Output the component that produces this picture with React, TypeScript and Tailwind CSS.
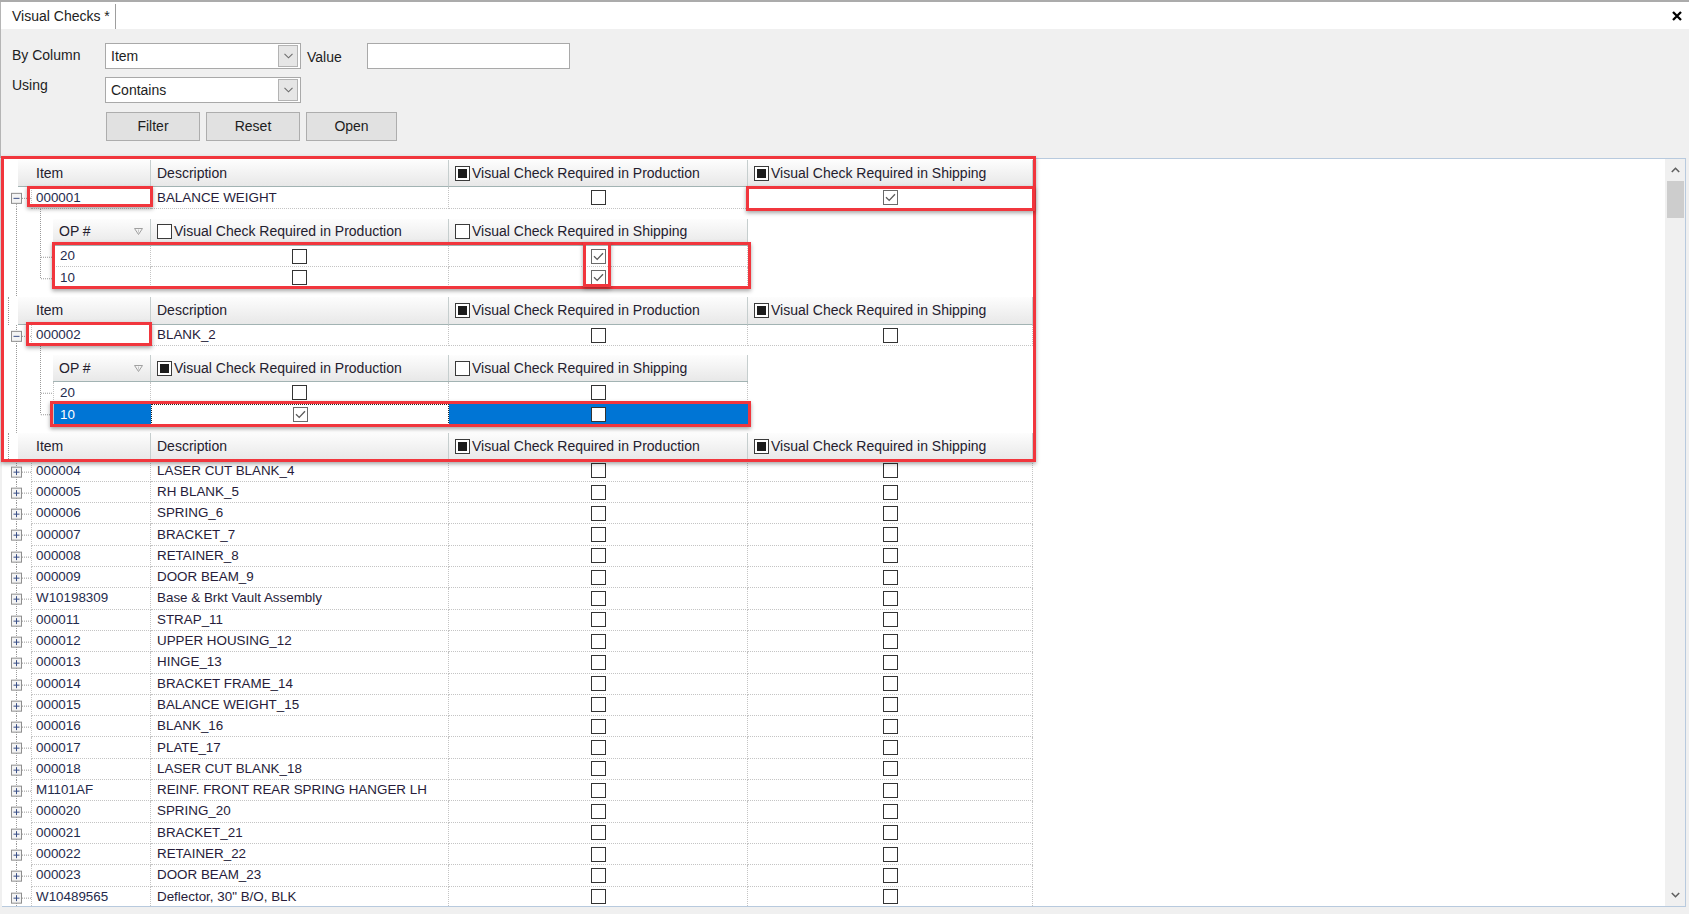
import React from 'react';

type Item = { item: string; desc: string };

const items: Item[] = [
  { item: '000004', desc: 'LASER CUT BLANK_4' },
  { item: '000005', desc: 'RH BLANK_5' },
  { item: '000006', desc: 'SPRING_6' },
  { item: '000007', desc: 'BRACKET_7' },
  { item: '000008', desc: 'RETAINER_8' },
  { item: '000009', desc: 'DOOR BEAM_9' },
  { item: 'W10198309', desc: 'Base & Brkt Vault Assembly' },
  { item: '000011', desc: 'STRAP_11' },
  { item: '000012', desc: 'UPPER HOUSING_12' },
  { item: '000013', desc: 'HINGE_13' },
  { item: '000014', desc: 'BRACKET FRAME_14' },
  { item: '000015', desc: 'BALANCE WEIGHT_15' },
  { item: '000016', desc: 'BLANK_16' },
  { item: '000017', desc: 'PLATE_17' },
  { item: '000018', desc: 'LASER CUT BLANK_18' },
  { item: 'M1101AF', desc: 'REINF. FRONT REAR SPRING HANGER LH' },
  { item: '000020', desc: 'SPRING_20' },
  { item: '000021', desc: 'BRACKET_21' },
  { item: '000022', desc: 'RETAINER_22' },
  { item: '000023', desc: 'DOOR BEAM_23' },
  { item: 'W10489565', desc: 'Deflector, 30" B/O, BLK' },
];

// red annotation frame drawn over the screenshot
const mark = 'absolute border-[3px] border-[#f1363d] shadow-[0_2px_4px_rgba(0,0,0,0.35)] pointer-events-none';

const CheckBox = ({ checked }: { checked?: boolean }) => (
  <span
    className={
      checked
        ? 'inline-flex w-[15px] h-[15px] shrink-0 items-center justify-center border border-[#6a6a6a] bg-white'
        : 'inline-flex w-[15px] h-[15px] shrink-0 items-center justify-center border border-[#333333] bg-white'
    }
  >
    {checked && (
      <svg width="11" height="9" viewBox="0 0 11 9">
        <path d="M1 4.3 L4.2 7.4 L10 1.2" fill="none" stroke="#5a5a5a" strokeWidth="1.3" />
      </svg>
    )}
  </span>
);

const HeadBox = ({ filled }: { filled?: boolean }) => (
  <span className="inline-flex w-[15px] h-[15px] shrink-0 border border-[#3a3a3a] bg-white p-[2px] mr-[2px]">
    {filled && <span className="flex-1 bg-[#1c1c1c]" />}
  </span>
);

const Expander = ({ open }: { open?: boolean }) => (
  <g>
    <rect x="9.5" y="-4.5" width="10" height="10" fill="#f4f4f4" stroke="#8e8e8e" />
    <line x1="11.5" y1="0.5" x2="17.5" y2="0.5" stroke="#3a4f86" />
    {!open && <line x1="14.5" y1="-2.5" x2="14.5" y2="3.5" stroke="#3a4f86" />}
  </g>
);

const Gutter = ({ h, first, open }: { h: number; first?: boolean; open?: boolean }) => {
  const c = h / 2;
  return (
    <svg width="29" height={h} className="block shrink-0">
      <line x1="14.5" y1={first ? c : 0} x2="14.5" y2={h} stroke="#9a9a9a" strokeDasharray="1 1" />
      <line x1="20" y1={c + 0.5} x2="29" y2={c + 0.5} stroke="#9a9a9a" strokeDasharray="1 1" />
      <g transform={`translate(0 ${c})`}>
        <Expander open={open} />
      </g>
    </svg>
  );
};

const MasterHeader = ({ first }: { first?: boolean }) => (
  <div className="flex h-[27.3px] text-[14px] text-[#24202e]">
    <div className="w-[16px] shrink-0 flex justify-center">
      {!first && <span className="w-px h-full border-l border-dotted border-[#9a9a9a] ml-[-3px]" />}
    </div>
    <div className="w-[133px] shrink-0 flex items-center pl-[18px] border-r border-b border-r-[#c6cece] border-b-[#a2b3b3] bg-linear-to-b from-[#fdfdfd] to-[#e8e8e8]">
      Item
    </div>
    <div className="w-[298px] shrink-0 flex items-center pl-[6px] border-r border-b border-r-[#c6cece] border-b-[#a2b3b3] bg-linear-to-b from-[#fdfdfd] to-[#e8e8e8]">
      Description
    </div>
    <div className="w-[299px] shrink-0 flex items-center pl-[6px] border-r border-b border-r-[#c6cece] border-b-[#a2b3b3] bg-linear-to-b from-[#fdfdfd] to-[#e8e8e8]">
      <HeadBox filled />
      Visual Check Required in Production
    </div>
    <div className="w-[285px] shrink-0 flex items-center pl-[6px] border-r border-b border-r-[#c6cece] border-b-[#a2b3b3] bg-linear-to-b from-[#fdfdfd] to-[#e8e8e8]">
      <HeadBox filled />
      Visual Check Required in Shipping
    </div>
  </div>
);

const MasterRow = ({
  item,
  desc,
  prod,
  ship,
  h,
  first,
  open,
}: {
  item: string;
  desc: string;
  prod?: boolean;
  ship?: boolean;
  h: number;
  first?: boolean;
  open?: boolean;
}) => (
  <div className="flex text-[13.4px]">
    <Gutter h={h} first={first} open={open} />
    <div className="w-[120px] shrink-0 flex items-center pl-[4px] text-[#1f2b4d] border-l border-r border-b border-dotted border-[#c4c4c4]">
      {item}
    </div>
    <div className="w-[298px] shrink-0 flex items-center pl-[6px] text-[#261c3a] border-r border-b border-dotted border-[#c4c4c4]">
      {desc}
    </div>
    <div className="w-[299px] shrink-0 flex items-center justify-center border-r border-b border-dotted border-[#c4c4c4]">
      <CheckBox checked={prod} />
    </div>
    <div className="w-[285px] shrink-0 flex items-center justify-center border-r border-b border-dotted border-[#c4c4c4]">
      <CheckBox checked={ship} />
    </div>
  </div>
);

type Op = { op: string; prod?: boolean; ship?: boolean; selected?: boolean };

const Detail = ({ ops, prodHead, tight }: { ops: Op[]; prodHead?: boolean; tight?: boolean }) => {
  const top = tight ? 8.7 : 9.7;
  const bottom = tight ? 7.8 : 8.5;
  const head = 27.3;
  const rh = 21.5;
  const total = top + head + rh * ops.length + bottom;
  const lastC = top + head + rh * (ops.length - 1) + rh / 2;
  return (
    <div className="flex">
      <svg width="51" height={total} className="block shrink-0">
        <line x1="14.5" y1="0" x2="14.5" y2={total} stroke="#9a9a9a" strokeDasharray="1 1" />
        <line x1="38.5" y1="0" x2="38.5" y2={lastC} stroke="#9a9a9a" strokeDasharray="1 1" />
        {ops.map((_, i) => {
          const y = top + head + rh * i + rh / 2 + 0.5;
          return <line key={i} x1="39" y1={y} x2="51" y2={y} stroke="#9a9a9a" strokeDasharray="1 1" />;
        })}
      </svg>
      <div className={tight ? 'pt-[8.7px] pb-[7.8px]' : 'pt-[9.7px] pb-[8.5px]'}>
        <div className="flex h-[27.3px] text-[14px] text-[#24202e] bg-linear-to-b from-[#fdfdfd] to-[#e8e8e8] border-b border-[#a2b3b3]">
          <div className="w-[98px] shrink-0 flex items-center justify-between pl-[6px] pr-[7px] border-r border-[#c6cece]">
            OP #
            <svg width="9" height="7" viewBox="0 0 9 7">
              <path d="M0.5 0.5 H8.5 L4.5 6.5 Z" fill="none" stroke="#a0a0a0" />
              <line x1="4.5" y1="1.5" x2="4.5" y2="4.5" stroke="#c8c8c8" />
            </svg>
          </div>
          <div className="w-[298px] shrink-0 flex items-center pl-[6px] border-r border-[#c6cece]">
            <HeadBox filled={prodHead} />
            Visual Check Required in Production
          </div>
          <div className="w-[299px] shrink-0 flex items-center pl-[6px] border-r border-[#c6cece]">
            <HeadBox />
            Visual Check Required in Shipping
          </div>
        </div>
        {ops.map((o) => (
          <div key={o.op} className="flex h-[21.5px] text-[13.4px]">
            <div
              className={
                o.selected
                  ? 'w-[98px] shrink-0 flex items-center pl-[6px] bg-[#0075d5] text-white border-l border-[#c4c4c4]'
                  : 'w-[98px] shrink-0 flex items-center pl-[6px] text-[#1f2b4d] border-l border-r border-b border-dotted border-[#c4c4c4]'
              }
            >
              {o.op}
            </div>
            <div
              className={
                o.selected
                  ? 'w-[298px] shrink-0 flex items-center justify-center bg-white border border-dotted border-[#222]'
                  : 'w-[298px] shrink-0 flex items-center justify-center border-r border-b border-dotted border-[#c4c4c4]'
              }
            >
              <CheckBox checked={o.prod} />
            </div>
            <div
              className={
                o.selected
                  ? 'w-[299px] shrink-0 flex items-center justify-center bg-[#0075d5]'
                  : 'w-[299px] shrink-0 flex items-center justify-center border-r border-b border-dotted border-[#c4c4c4]'
              }
            >
              <CheckBox checked={o.ship} />
            </div>
          </div>
        ))}
      </div>
    </div>
  );
};

const Combo = ({ value }: { value: string }) => (
  <div className="w-[196px] h-[26px] flex items-center justify-between bg-white border border-[#a9a9a9] pl-[5px] pr-[2px]">
    <span>{value}</span>
    <span className="w-[20px] h-[22px] flex items-center justify-center bg-[#e6e6e6] border border-[#b3b3b3]">
      <svg width="9" height="6" viewBox="0 0 9 6">
        <path d="M0.5 0.8 L4.5 4.8 L8.5 0.8" fill="none" stroke="#6d6d6d" strokeWidth="1.1" />
      </svg>
    </span>
  </div>
);

const Btn = ({ label, w }: { label: string; w: string }) => (
  <button className={`${w} h-[29px] bg-[#e1e1e1] border border-[#adadad] text-[14px] text-[#1d1d1d]`}>{label}</button>
);

export default function App() {
  return (
    <div className="relative w-[1689px] h-[914px] overflow-hidden bg-[#f0f0f0] flex flex-col font-['Liberation_Sans',Arial,sans-serif] text-[#1d1d1d]">
      <div className="h-[2px] bg-[#ababab] shrink-0" />

      {/* tab strip */}
      <div className="h-[27px] shrink-0 bg-white flex items-stretch justify-between border-l border-[#b5b5b5]">
        <div className="ml-[7px] mt-[2px] pl-[4px] pr-[5px] flex items-center text-[14px] text-[#222] border-r border-[#9e9e9e]">
          Visual Checks *
        </div>
        <div className="flex items-center pr-[7px]">
          <svg width="10" height="10" viewBox="0 0 10 10">
            <path d="M1 1 L9 9 M9 1 L1 9" stroke="#000" strokeWidth="2.3" />
          </svg>
        </div>
      </div>

      {/* filter panel */}
      <div className="h-[129px] shrink-0 pt-[14px] pl-[11px] text-[14px] border-l border-[#b5b5b5]">
        <div className="flex h-[26px] items-center">
          <span className="w-[93px] shrink-0 mt-[-2px]">By Column</span>
          <Combo value="Item" />
          <span className="ml-[6px] w-[60px] pt-[2px]">Value</span>
          <div className="w-[203px] h-[26px] bg-white border border-[#a9a9a9]" />
        </div>
        <div className="flex h-[26px] mt-[8px]">
          <span className="w-[93px] shrink-0 leading-[16px]">Using</span>
          <Combo value="Contains" />
        </div>
        <div className="flex gap-[6px] mt-[9px] ml-[94px]">
          <Btn label="Filter" w="w-[94px]" />
          <Btn label="Reset" w="w-[94px]" />
          <Btn label="Open" w="w-[91px]" />
        </div>
      </div>

      {/* grid */}
      <div className="flex-1 min-h-0 ml-[2px] mr-[3px] mb-[7px] flex bg-white border-t border-r border-b border-[#b8cade]">
        <div className="flex-1 min-w-0 overflow-hidden pt-[1px]">
          <MasterHeader first />
          <MasterRow item="000001" desc="BALANCE WEIGHT" ship h={21.7} first open />
          <Detail ops={[{ op: '20', ship: true }, { op: '10', ship: true }]} />
          <MasterHeader />
          <MasterRow item="000002" desc="BLANK_2" h={21.7} open />
          <Detail tight prodHead ops={[{ op: '20' }, { op: '10', prod: true, selected: true }]} />
          <MasterHeader />
          {items.map((r) => (
            <MasterRow key={r.item} item={r.item} desc={r.desc} h={21.3} />
          ))}
        </div>
        {/* scrollbar */}
        <div className="w-[20px] shrink-0 bg-[#f0f0f0] flex flex-col items-center">
          <div className="h-[22px] flex items-center justify-center">
            <svg width="9" height="6" viewBox="0 0 9 6">
              <path d="M0.8 5 L4.5 1.3 L8.2 5" fill="none" stroke="#606060" strokeWidth="1.6" />
            </svg>
          </div>
          <div className="w-[17px] h-[37px] bg-[#cdcdcd]" />
          <div className="flex-1" />
          <div className="h-[22px] flex items-center justify-center">
            <svg width="9" height="6" viewBox="0 0 9 6">
              <path d="M0.8 1 L4.5 4.7 L8.2 1" fill="none" stroke="#606060" strokeWidth="1.6" />
            </svg>
          </div>
        </div>
      </div>

      {/* annotation frames */}
      <div className={`${mark} left-[1px] top-[156px] w-[1035px] h-[306px]`} />
      <div className={`${mark} left-[27px] top-[186px] w-[126px] h-[21px]`} />
      <div className={`${mark} left-[746px] top-[186px] w-[289px] h-[25px]`} />
      <div className={`${mark} left-[52px] top-[242px] w-[699px] h-[47px]`} />
      <div className={`${mark} left-[583px] top-[242px] w-[28px] h-[45px]`} />
      <div className={`${mark} left-[26px] top-[322px] w-[126px] h-[24px]`} />
      <div className={`${mark} left-[50px] top-[401px] w-[701px] h-[26px]`} />
    </div>
  );
}
